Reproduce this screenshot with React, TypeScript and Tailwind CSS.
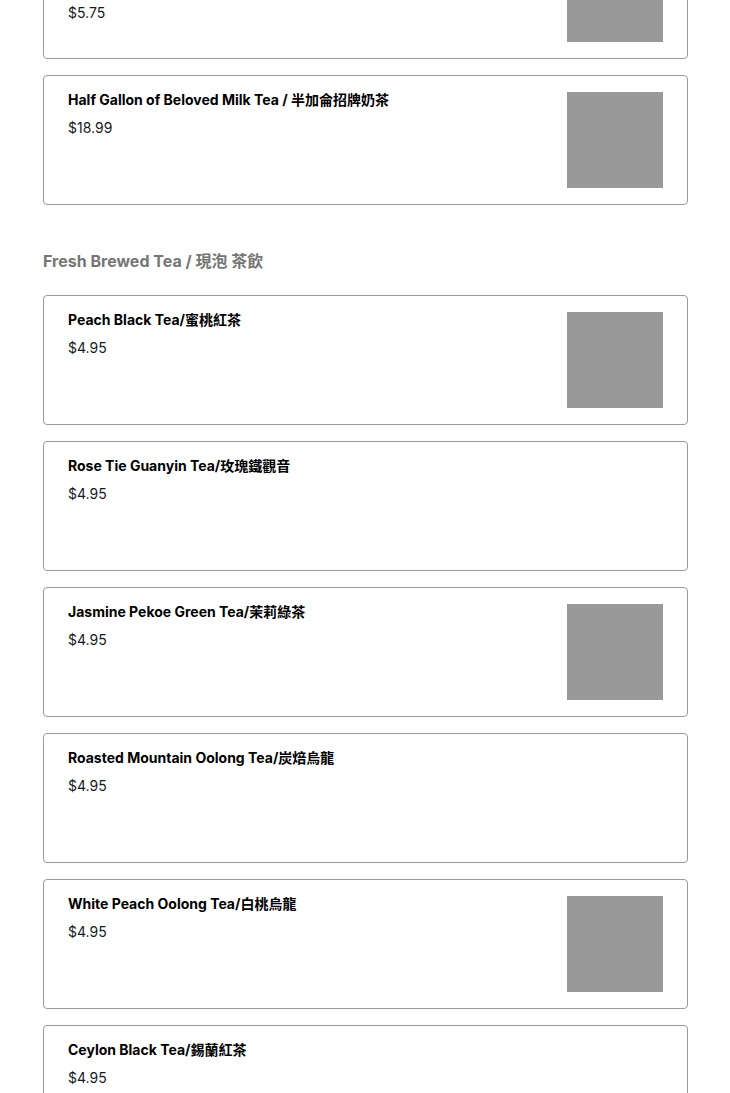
import React from 'react';

type Item = {
  name: string;
  price: string;
  image: boolean;
  description?: string;
};

const topItems: Item[] = [
  {
    name: 'Beloved Milk Tea / 招牌奶茶',
    description: 'Our signature black milk tea',
    price: '$5.75',
    image: true,
  },
  { name: 'Half Gallon of Beloved Milk Tea / 半加侖招牌奶茶', price: '$18.99', image: true },
];

const brewedItems: Item[] = [
  { name: 'Peach Black Tea/蜜桃紅茶', price: '$4.95', image: true },
  { name: 'Rose Tie Guanyin Tea/玫瑰鐵觀音', price: '$4.95', image: false },
  { name: 'Jasmine Pekoe Green Tea/茉莉綠茶', price: '$4.95', image: true },
  { name: 'Roasted Mountain Oolong Tea/炭焙烏龍', price: '$4.95', image: false },
  { name: 'White Peach Oolong Tea/白桃烏龍', price: '$4.95', image: true },
  { name: 'Ceylon Black Tea/錫蘭紅茶', price: '$4.95', image: false },
];

function MenuCard({ item }: { item: Item }) {
  return (
    <div className="flex min-h-[130px] justify-between rounded-[4px] border border-[#9a9a9a] bg-white px-6 pt-4 pb-4">
      <div className="-mt-px flex flex-col">
        <div className="text-[14px] font-bold leading-[18px] text-black">{item.name}</div>
        {item.description && (
          <div className="mt-[10px] text-[14px] leading-[21px] text-[#545454]">{item.description}</div>
        )}
        <div className="mt-[10px] text-[14px] leading-[18px] text-[#1a1a1a]">{item.price}</div>
      </div>
      {item.image && <div className="h-[96px] w-[96px] shrink-0 self-end bg-[#999999]" />}
    </div>
  );
}

export default function App() {
  return (
    <div
      className="min-h-screen overflow-hidden bg-white"
      style={{ fontFamily: 'Inter, "Noto Sans CJK TC", sans-serif' }}
    >
      <div className="-mt-[71px] w-[731px] px-[43px]">
        <div className="flex flex-col gap-4">
          {topItems.map((item) => (
            <MenuCard key={item.name} item={item} />
          ))}
        </div>

        <h2 className="mt-[46px] mb-[24px] text-[16px] font-bold leading-[20px] text-[#767676]">
          Fresh Brewed Tea / 現泡 茶飲
        </h2>

        <div className="flex flex-col gap-4">
          {brewedItems.map((item) => (
            <MenuCard key={item.name} item={item} />
          ))}
        </div>
      </div>
    </div>
  );
}
